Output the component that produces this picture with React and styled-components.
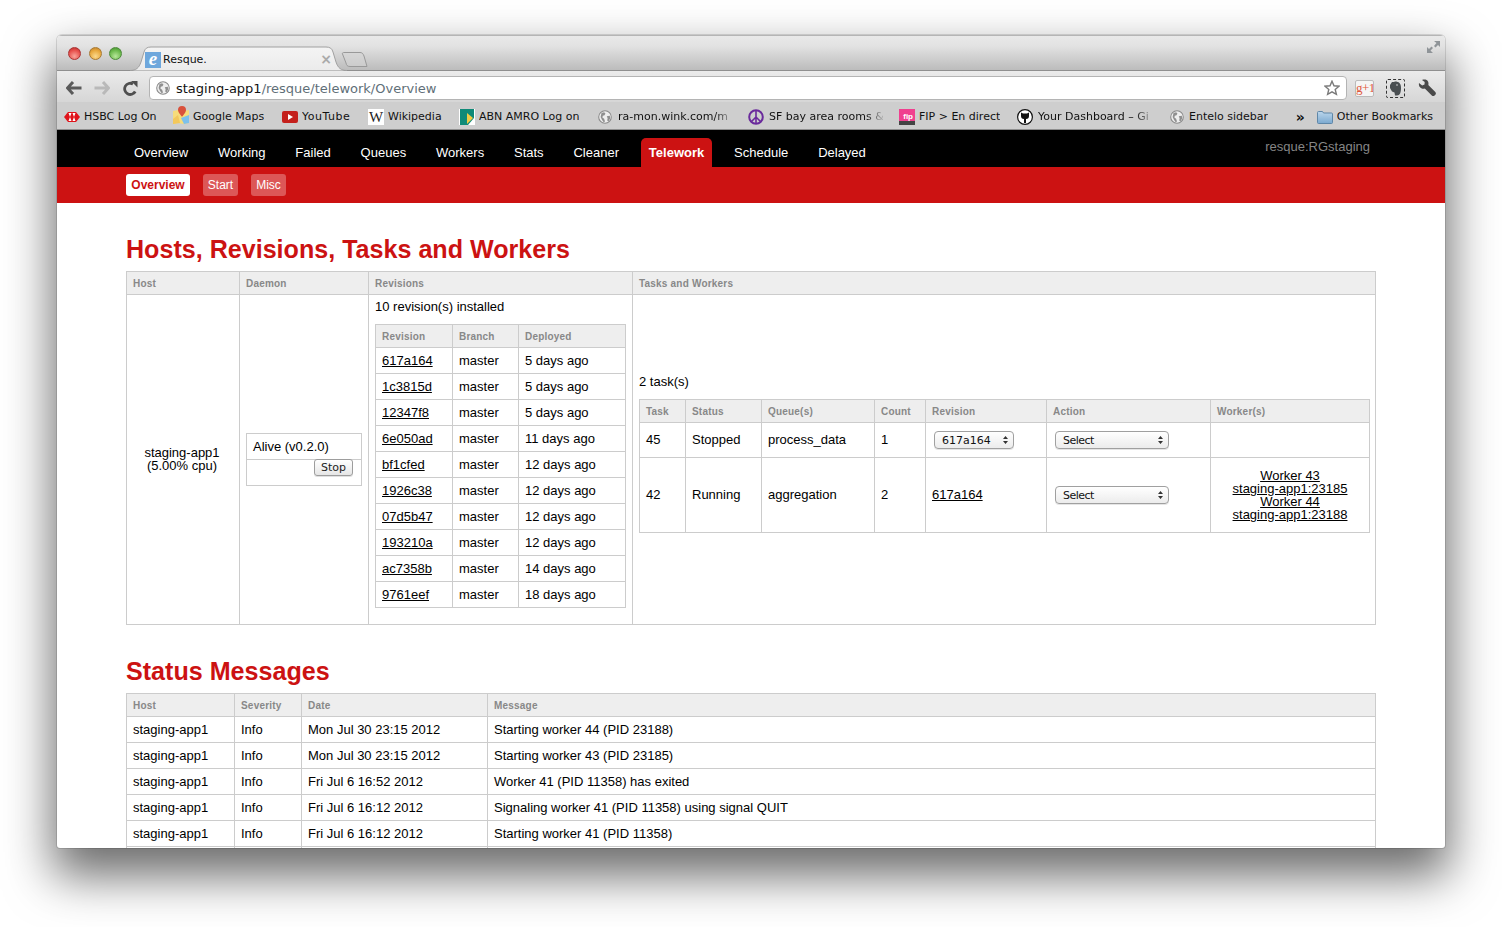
import React from 'react';
import styled, { createGlobalStyle } from 'styled-components';

const Global = createGlobalStyle`
  html, body { margin: 0; padding: 0; background: #fff; height: 927px; overflow: hidden; }
  body { font-family: "Liberation Sans", Arial, sans-serif; font-size: 13px; color: #000; }
  * { box-sizing: border-box; }
`;
const chromeFont = `"DejaVu Sans", "Liberation Sans", sans-serif`;
const RED = '#cc1212';

const Stage = styled.div`padding: 35px 57px 0;`;
const Win = styled.div`
  width: 1388px; height: 813px; overflow: hidden; background: #fff;
  border-radius: 5px 5px 3px 3px;
  box-shadow: 0 24px 48px 4px rgba(0,0,0,.58), 0 0 0 1px rgba(0,0,0,.12);
`;
const TitleBar = styled.div`
  height: 36px; display: flex; align-items: flex-end; padding-left: 11px; position: relative;
  background: linear-gradient(#e9e9e9, #e2e2e2 30%, #bcbcbc);
  border-bottom: 1px solid #8f8f8f; border-top: 1px solid #b5b5b5;
`;
const Lights = styled.div`display: flex; gap: 7.5px; align-self: flex-start; margin-top: 11px;`;
const Light = styled.span`
  width: 13px; height: 13px; border-radius: 50%; border: 1px solid ${p => p.$edge};
  background: radial-gradient(circle at 50% 75%, ${p => p.$glow}, ${p => p.$c} 60%, ${p => p.$dark});
`;
const Tab = styled.div`
  position: relative; width: 217px; height: 25px; margin-left: 8px; margin-bottom: -1px;
  display: flex; align-items: center; padding: 2px 0 0 15px;
  font: 11px ${chromeFont}; color: #111;
`;
const TabShape = styled.svg`position: absolute; left: 0; top: 0;`;
const TabFav = styled.span`
  position: relative; width: 16px; height: 16px; background: #6ea7dc; color: #fff;
  font: italic bold 19px/14px "Liberation Serif", serif; text-align: center; flex: none;
`;
const TabTitle = styled.span`position: relative; margin-left: 2px; flex: 1;`;
const TabClose = styled.span`position: relative; color: #aaa; font: bold 14px/13px ${chromeFont}; margin-right: 15px;`;
const NewTab = styled.svg`margin: 0 0 2px -6px; position: relative;`;
const Expand = styled.svg`position: absolute; right: 4px; top: 4px;`;

const Toolbar = styled.div`
  height: 31px; display: flex; align-items: center; padding: 3px 0 0 3px;
  background: linear-gradient(#ebebeb, #d6d6d6);
`;
const NavBtn = styled.span`width: 28px; height: 24px; display: flex; align-items: center; justify-content: center; flex: none;`;
const Omni = styled.div`
  flex: 1; height: 24px; margin: 0 2px 0 5px; background: #fff; border: 1px solid #b4b4b4; border-radius: 4px;
  display: flex; align-items: center; padding: 0 6px 0 6px; font: 13px ${chromeFont};
`;
const Host = styled.span`color: #111; margin-left: 6px;`;
const UrlPath = styled.span`color: #5f6f78; flex: 1;`;
const Extras = styled.div`display: flex; width: 96px; padding-right: 2px; flex: none;`;
const Extra = styled.span`width: 31px; height: 24px; display: flex; align-items: center; justify-content: center;`;
const PlusOne = styled.span`
  width: 19px; height: 17px; border: 1px solid #bbb; border-radius: 2px; background: #f5f5f5; color: #e0593d;
  font: 13px/14px "Liberation Serif", serif; text-align: center; overflow: hidden; white-space: nowrap; letter-spacing: -.6px;
`;
const Dashed = styled.span`
  width: 19px; height: 19px; border: 1px dashed #333; border-radius: 2px; display: flex; align-items: center; justify-content: center;
`;

const Bookmarks = styled.div`
  height: 28px; display: flex; align-items: center; padding: 2px 12px 0 7px;
  background: #cecece; border-bottom: 1px solid #8e8e8e; font: 11px ${chromeFont}; color: #111;
`;
const Mark = styled.span`
  display: flex; align-items: center; gap: ${p => p.$gap ?? 4}px; white-space: nowrap; flex: none;
  width: ${p => p.$slot ? p.$slot + 'px' : 'auto'};
`;
const MarkLabel = styled.span`
  display: block; overflow: hidden; letter-spacing: ${p => p.$ls ?? 0}px;
  ${p => p.$w ? `width: ${p.$w}px; -webkit-mask-image: linear-gradient(90deg, #000 85%, rgba(0,0,0,.15));` : ''}
`;
const Chevrons = styled.span`font: bold 14px/14px ${chromeFont}; margin-left: auto; margin-right: 12px;`;
const WikiIcon = styled.span`
  width: 16px; height: 16px; background: #fff; font: 15px/16px "Liberation Serif", serif; text-align: center; color: #222; flex: none;
`;

const TopNav = styled.nav`
  height: 37px; background: #000; display: flex; align-items: flex-end; padding-left: 69px; gap: 13.85px;
`;
const TopLink = styled.a`
  height: 29px; padding: 0 8px; color: #fff; font-size: 13px; line-height: 29px; border-radius: 5px 5px 0 0;
  font-weight: ${p => p.$on ? 700 : 400}; background: ${p => p.$on ? RED : 'transparent'};
`;
const Namespace = styled.span`
  margin-left: auto; margin-right: 75px; align-self: flex-start; padding-top: 9px; color: #858585; font-size: 13px; line-height: 16px;
`;
const SubNav = styled.nav`
  height: 36px; background: ${RED}; display: flex; align-items: center; padding-left: 69px; gap: 13px;
`;
const SubLink = styled.a`
  height: 22px; width: ${p => p.$on ? 64 : 35}px; text-align: center; line-height: 22px; font-size: 12px; border-radius: 3px;
  font-weight: ${p => p.$on ? 700 : 400};
  color: ${p => p.$on ? RED : '#fff'}; background: ${p => p.$on ? '#fff' : '#dc5757'};
`;

const Content = styled.main`padding: 0 69px;`;
const Heading = styled.h1`
  margin: 32px 0 8px; font-size: 25.1px; line-height: 28px; font-weight: 700; color: ${RED};
`;
const Table = styled.table`
  border-collapse: collapse; table-layout: fixed; width: ${p => p.$w}px;
  margin-bottom: ${p => p.$mb ?? 0}px;
`;
const Col = styled.col`width: ${p => p.$w}px;`;
const Th = styled.th`
  background: #eee; border: 1px solid #ccc; padding: 7px 6px 5px; height: 23px; font-size: 10px; line-height: 10px;
  font-weight: 700; color: #888; text-align: left; letter-spacing: .2px;
`;
const Td = styled.td`
  border: 1px solid #ccc; padding: ${p => p.$pad ?? '6px'}; line-height: 13px; font-size: 13px; height: ${p => p.$h ? p.$h + 'px' : 'auto'};
  text-align: ${p => p.$center ? 'center' : 'left'}; vertical-align: middle;
`;
const Note = styled.p`margin: -1px 0 11px; line-height: 13px;`;
const Link = styled.a`color: #000; text-decoration: underline;`;
const Stack = styled.div`display: flex; flex-direction: column;`;
const ButtonCell = styled(Td)`padding: 0 8px 9px; text-align: right; vertical-align: top;`;
const StopButton = styled.button`
  display: inline-block; width: 39px; height: 17px; padding: 0; margin-top: -1px; border: 1px solid #9d9d9d; border-radius: 3px;
  background: linear-gradient(#fff, #e6e6e6); font: 11px/15px ${chromeFont}; color: #222; vertical-align: top;
  box-shadow: 0 1px 0 rgba(0,0,0,.12);
`;
const SelectWrap = styled.span`
  position: relative; display: inline-block; width: ${p => p.$w}px; height: 18px; vertical-align: middle;
`;
const SelectBox = styled.select`
  appearance: none; width: 100%; height: 18px; margin: 0; padding: 0 0 0 ${p => p.$pl}px; border: 1px solid #a0a0a0; border-radius: 4px;
  background: linear-gradient(#fff, #ececec); font: 11px ${chromeFont}; color: #111; display: block;
  letter-spacing: ${p => p.$ls ?? 0}px;
  box-shadow: 0 1px 0 rgba(0,0,0,.1);
`;
const SelectArrows = styled.svg`position: absolute; right: 6px; top: 5px; pointer-events: none;`;

const Select = ({ w, pl, label, ls }) => (
  <SelectWrap $w={w}>
    <SelectBox $pl={pl} $ls={ls} defaultValue={label}><option>{label}</option></SelectBox>
    <SelectArrows width="5" height="8" viewBox="0 0 5 8"><path d="M2.5 0L5 3H0zM2.5 8L0 5h5z" fill="#333" /></SelectArrows>
  </SelectWrap>
);

const Globe = ({ s = 14 }) => (
  <svg width={s} height={s} viewBox="0 0 16 16" style={{ flex: 'none' }}>
    <circle cx="8" cy="8" r="7.2" fill="#eee" stroke="#8a8a8a" strokeWidth="1.2" />
    <path d="M4 3.5l3-1 1.5 1.5-1 2-2 .5-.5 2 2 1.5 1 3-1.5 1-2-3-1.5-3zM10 7l3.5-.5.5 3-2 3.5-1.5-1 .5-2.5z" fill="#8f8f8f" />
  </svg>
);
const Arrow = ({ dir, c }) => (
  <svg width="16" height="14" viewBox="0 0 16 14" style={{ transform: dir === 'r' ? 'scaleX(-1)' : 'none' }}>
    <path d="M7 1L1.5 7 7 13M2 7h13.5" fill="none" stroke={c} strokeWidth="3" />
  </svg>
);
const Hsbc = () => (
  <svg width="16" height="10" viewBox="0 0 16 10" style={{ flex: 'none' }}>
    <path d="M0 5l4-5h8l4 5-4 5H4z" fill="#e0131a" /><path d="M4.5 1h3L6 5l1.5 4h-3L6 5zM8.5 1h3L10 5l1.5 4h-3L10 5z" fill="#fff" />
  </svg>
);
const Maps = () => (
  <svg width="16" height="18" viewBox="0 0 16 18" style={{ flex: 'none', marginTop: -3 }}>
    <path d="M0 5l5-1 6 1 5-1v13l-5 1-6-1-5 1z" fill="#f7dc7a" /><path d="M8 12l8-3v8l-5 1z" fill="#7cc0ec" /><path d="M0 13l5-4 2 8-7 1z" fill="#f3c85c" />
    <path d="M9 0a4 4 0 014 4c0 3-4 6-4 7 0-1-4-4-4-7a4 4 0 014-4z" fill="#d9513b" />
  </svg>
);
const Youtube = () => (
  <svg width="16" height="12" viewBox="0 0 16 12" style={{ flex: 'none' }}>
    <rect width="16" height="12" rx="2" fill="#c4201c" /><path d="M6 3l5 3-5 3z" fill="#fff" />
  </svg>
);
const Abn = () => (
  <svg width="16" height="16" viewBox="0 0 16 16" style={{ flex: 'none' }}>
    <rect width="16" height="16" fill="#fff" /><path d="M1 0h14v9l-6 7H1z" fill="#0f8a78" /><path d="M8 4l6 5-6 6z" fill="#f2cb45" />
  </svg>
);
const Peace = () => (
  <svg width="16" height="16" viewBox="0 0 16 16" style={{ flex: 'none' }}>
    <circle cx="8" cy="8" r="6.8" fill="none" stroke="#6a2a9c" strokeWidth="2" /><path d="M8 1v14M8 8L3 13M8 8l5 5" stroke="#6a2a9c" strokeWidth="1.6" fill="none" />
  </svg>
);
const FipBox = styled.span`
  width: 16px; height: 16px; flex: none; background: linear-gradient(#f0408f 75%, #444 75%); color: #fff;
  font: bold 8px/16px "Liberation Sans", sans-serif; text-align: right; padding-right: 2px;
`;
const Github = () => (
  <svg width="16" height="16" viewBox="0 0 16 16" style={{ flex: 'none' }}>
    <circle cx="8" cy="8" r="7.4" fill="#fff" stroke="#111" strokeWidth="1.2" />
    <path d="M4 3.500l2 1h4l2-1v3.500c0 2-1 3-3 3v4H7v-4c-2 0-3-1-3-3z" fill="#111" />
  </svg>
);
const Folder = () => (
  <svg width="16" height="14" viewBox="0 0 16 14" style={{ flex: 'none' }}>
    <defs><linearGradient id="fld" x1="0" y1="0" x2="0" y2="1"><stop offset="0" stopColor="#bcd6ec" /><stop offset="1" stopColor="#7ba9cf" /></linearGradient></defs>
    <path d="M.5 2.5a1 1 0 011-1h4l1 1.5h8a1 1 0 011 1v8.500a1 1 0 01-1 1h-13a1 1 0 01-1-1z" fill="url(#fld)" stroke="#5f87a8" />
  </svg>
);

const revisions = [
  ['617a164', '5 days ago'], ['1c3815d', '5 days ago'], ['12347f8', '5 days ago'], ['6e050ad', '11 days ago'], ['bf1cfed', '12 days ago'],
  ['1926c38', '12 days ago'], ['07d5b47', '12 days ago'], ['193210a', '12 days ago'], ['ac7358b', '14 days ago'], ['9761eef', '18 days ago'],
];
const messages = [
  ['Mon Jul 30 23:15 2012', 'Starting worker 44 (PID 23188)'],
  ['Mon Jul 30 23:15 2012', 'Starting worker 43 (PID 23185)'],
  ['Fri Jul 6 16:52 2012', 'Worker 41 (PID 11358) has exited'],
  ['Fri Jul 6 16:12 2012', 'Signaling worker 41 (PID 11358) using signal QUIT'],
  ['Fri Jul 6 16:12 2012', 'Starting worker 41 (PID 11358)'],
];
const nav = ['Overview', 'Working', 'Failed', 'Queues', 'Workers', 'Stats', 'Cleaner', 'Telework', 'Schedule', 'Delayed'];
const TASK_PAD = '5px 6px 7px';

export default function App() {
  return (
    <>
      <Global />
      <Stage>
        <Win>
          <TitleBar>
            <Lights>
              <Light $c="#e8504c" $glow="#f9a49a" $dark="#b22a2a" $edge="#a33" />
              <Light $c="#e8a83c" $glow="#fbd98c" $dark="#b5782a" $edge="#a87a33" />
              <Light $c="#6cba4c" $glow="#b7e79a" $dark="#3f8a2e" $edge="#4d8a3b" />
            </Lights>
            <Tab>
              <TabShape width="217" height="25" viewBox="0 0 217 25">
                <defs><linearGradient id="tabg" x1="0" y1="0" x2="0" y2="1"><stop offset="0" stopColor="#f4f4f4" /><stop offset="1" stopColor="#ebebeb" /></linearGradient></defs>
                <path d="M0 24.500C6 24.500 9 22 11 16L14 6C15 2.500 17 1 21 1H196C200 1 202 2.500 203 6L206 16C208 22 211 24.500 217 24.500" fill="url(#tabg)" stroke="#a0a0a0" />
              </TabShape>
              <TabFav>e</TabFav>
              <TabTitle>Resque.</TabTitle>
              <TabClose>×</TabClose>
            </Tab>
            <NewTab width="28" height="17" viewBox="0 0 28 17">
              <path d="M3 1.500H19C21 1.500 22 2.500 23 5L26 15.500H9C6 15.500 5.500 14 5 12L1.500 3C1 2 2 1.500 3 1.500Z" fill="#d6d6d6" fillOpacity=".5" stroke="#999" />
            </NewTab>
            <Expand width="15" height="14" viewBox="0 0 15 14">
              <path d="M8 1h6v6l-2-2-2.500 2.500-1.500-1.500L10.500 3zM7 13H1V7l2 2 2.500-2.500L7 8 4.500 10.500z" fill="#8f9498" />
            </Expand>
          </TitleBar>
          <Toolbar>
            <NavBtn><Arrow c="#5a5a5a" /></NavBtn>
            <NavBtn><Arrow dir="r" c="#b9b9b9" /></NavBtn>
            <NavBtn>
              <svg width="15" height="15" viewBox="0 0 15 15">
                <path d="M12.200 10.500A5.600 5.600 0 1110 3" fill="none" stroke="#4f4f4f" strokeWidth="2.800" /><path d="M8 0l6.500 0v6.500z" fill="#4f4f4f" />
              </svg>
            </NavBtn>
            <Omni>
              <Globe s={14} />
              <Host>staging-app1</Host><UrlPath>/resque/telework/Overview</UrlPath>
              <svg width="16" height="16" viewBox="0 0 16 16">
                <path d="M8 1.200l2 4.600 5 .4-3.800 3.300 1.200 4.900L8 11.800l-4.400 2.600 1.200-4.900L1 6.200l5-.4z" fill="#fff" stroke="#7a7a7a" strokeWidth="1.400" />
              </svg>
            </Omni>
            <Extras>
              <Extra><PlusOne>g+1</PlusOne></Extra>
              <Extra>
                <Dashed>
                  <svg width="13" height="15" viewBox="0 0 13 15">
                    <path d="M3 1h2l1 -.5c4 0 6 2 6 6.500s-1 7.500-4 7.500H6l-.5-3-2.500-1L1 7V4z" fill="#4a4f52" /><circle cx="8" cy="4" r=".8" fill="#ddd" />
                  </svg>
                </Dashed>
              </Extra>
              <Extra>
                <svg width="18" height="18" viewBox="0 0 18 18">
                  <path d="M1 4l3.200 2.600L6.500 5.500 6.700 3 4 1c2.500-1 5-.5 6 1.500.6 1.200.6 2.500.3 3.500l7 7c.8.800.8 2 0 2.800l-.7.700c-.8.800-2 .8-2.800 0l-7-7c-1 .3-2.300.3-3.500-.3C1.500 8.500.5 6.500 1 4z" fill="#4a4a4a" />
                </svg>
              </Extra>
            </Extras>
          </Toolbar>
          <Bookmarks>
            <Mark $slot={109}><Hsbc /><MarkLabel>HSBC Log On</MarkLabel></Mark>
            <Mark $slot={109}><Maps /><MarkLabel>Google Maps</MarkLabel></Mark>
            <Mark $slot={86}><Youtube /><MarkLabel $ls={.5}>YouTube</MarkLabel></Mark>
            <Mark $slot={91}><WikiIcon>W</WikiIcon><MarkLabel>Wikipedia</MarkLabel></Mark>
            <Mark $slot={139}><Abn /><MarkLabel>ABN AMRO Log on</MarkLabel></Mark>
            <Mark $slot={150} $gap={6}><Globe /><MarkLabel $w={114}>ra-mon.wink.com/m</MarkLabel></Mark>
            <Mark $slot={151} $gap={5}><Peace /><MarkLabel $w={114}>SF bay area rooms &amp;</MarkLabel></Mark>
            <Mark $slot={118}><FipBox>fip</FipBox><MarkLabel>FIP &gt; En direct</MarkLabel></Mark>
            <Mark $slot={153} $gap={5}><Github /><MarkLabel $w={114}>Your Dashboard – Gi</MarkLabel></Mark>
            <Mark $gap={5}><Globe /><MarkLabel>Entelo sidebar</MarkLabel></Mark>
            <Chevrons>»</Chevrons>
            <Mark><Folder /><MarkLabel>Other Bookmarks</MarkLabel></Mark>
          </Bookmarks>
          <TopNav>
            {nav.map(n => <TopLink key={n} $on={n === 'Telework'}>{n}</TopLink>)}
            <Namespace>resque:RGstaging</Namespace>
          </TopNav>
          <SubNav>
            <SubLink $on>Overview</SubLink>
            <SubLink>Start</SubLink>
            <SubLink>Misc</SubLink>
          </SubNav>
          <Content>
            <Heading>Hosts, Revisions, Tasks and Workers</Heading>
            <Table $w={1249}>
              <colgroup><Col $w={113} /><Col $w={129} /><Col $w={264} /><Col $w={743} /></colgroup>
              <thead><tr><Th>Host</Th><Th>Daemon</Th><Th>Revisions</Th><Th>Tasks and Workers</Th></tr></thead>
              <tbody>
                <tr>
                  <Td $center $pad="5px 8px 7px 6px">staging-app1<br />(5.00% cpu)</Td>
                  <Td>
                    <Table $w={116}>
                      <tbody>
                        <tr><Td>Alive (v0.2.0)</Td></tr>
                        <tr><ButtonCell><StopButton>Stop</StopButton></ButtonCell></tr>
                      </tbody>
                    </Table>
                  </Td>
                  <Td>
                    <Note>10 revision(s) installed</Note>
                    <Table $w={250} $mb={10}>
                      <colgroup><Col $w={77} /><Col $w={66} /><Col $w={107} /></colgroup>
                      <thead><tr><Th>Revision</Th><Th>Branch</Th><Th>Deployed</Th></tr></thead>
                      <tbody>
                        {revisions.map(([r, d]) => (
                          <tr key={r}><Td><Link>{r}</Link></Td><Td>master</Td><Td>{d}</Td></tr>
                        ))}
                      </tbody>
                    </Table>
                  </Td>
                  <Td>
                    <Note>2 task(s)</Note>
                    <Table $w={730} $mb={10}>
                      <colgroup><Col $w={46} /><Col $w={76} /><Col $w={113} /><Col $w={51} /><Col $w={121} /><Col $w={164} /><Col $w={159} /></colgroup>
                      <thead><tr><Th>Task</Th><Th>Status</Th><Th>Queue(s)</Th><Th>Count</Th><Th>Revision</Th><Th>Action</Th><Th>Worker(s)</Th></tr></thead>
                      <tbody>
                        <tr>
                          <Td $h={35} $pad={TASK_PAD}>45</Td><Td $pad={TASK_PAD}>Stopped</Td><Td $pad={TASK_PAD}>process_data</Td><Td $pad={TASK_PAD}>1</Td>
                          <Td $pad="0 6px 0 8px"><Select w={80} pl={7} label="617a164" /></Td>
                          <Td $pad="0 8px"><Select w={114} pl={7} ls={-.5} label="Select" /></Td>
                          <Td />
                        </tr>
                        <tr>
                          <Td $pad={TASK_PAD}>42</Td><Td $pad={TASK_PAD}>Running</Td><Td $pad={TASK_PAD}>aggregation</Td><Td $pad={TASK_PAD}>2</Td>
                          <Td $pad={TASK_PAD}><Link>617a164</Link></Td>
                          <Td $pad="0 8px"><Select w={114} pl={7} ls={-.5} label="Select" /></Td>
                          <Td $center $pad="11px 6px">
                            <Stack>
                              <Link>Worker 43</Link><Link>staging-app1:23185</Link>
                              <Link>Worker 44</Link><Link>staging-app1:23188</Link>
                            </Stack>
                          </Td>
                        </tr>
                      </tbody>
                    </Table>
                  </Td>
                </tr>
              </tbody>
            </Table>
            <Heading>Status Messages</Heading>
            <Table $w={1249}>
              <colgroup><Col $w={108} /><Col $w={67} /><Col $w={186} /><Col $w={888} /></colgroup>
              <thead><tr><Th>Host</Th><Th>Severity</Th><Th>Date</Th><Th>Message</Th></tr></thead>
              <tbody>
                {messages.map(([d, m]) => (
                  <tr key={m + d}><Td>staging-app1</Td><Td>Info</Td><Td>{d}</Td><Td>{m}</Td></tr>
                ))}
                <tr><Td $h={26} /><Td /><Td /><Td /></tr>
              </tbody>
            </Table>
          </Content>
        </Win>
      </Stage>
    </>
  );
}
